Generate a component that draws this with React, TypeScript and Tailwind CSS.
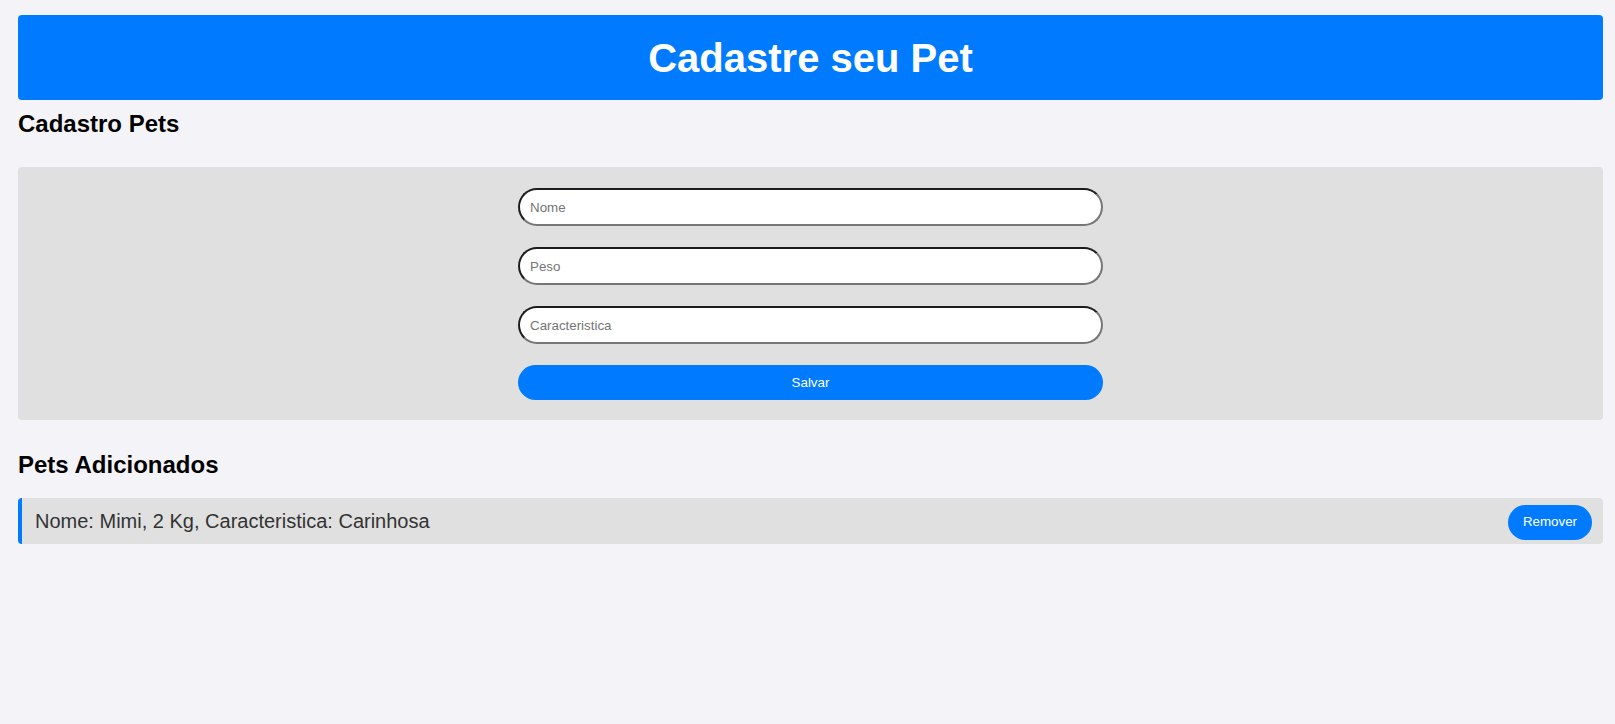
import { useState } from 'react';

type Pet = { nome: string; peso: string; caracteristica: string };

const inputCls =
  'h-[38px] w-full rounded-[20px] border-2 border-solid border-t-[#1c1c1c] border-l-[#1c1c1c] border-b-[#767676] border-r-[#767676] bg-white px-[10px] text-[13.33px] text-black outline-none placeholder:text-[#757575]';

export default function App() {
  const [pets, setPets] = useState<Pet[]>([{ nome: 'Mimi', peso: '2', caracteristica: 'Carinhosa' }]);
  const [form, setForm] = useState<Pet>({ nome: '', peso: '', caracteristica: '' });

  const salvar = () => {
    if (!form.nome) return;
    setPets([...pets, form]);
    setForm({ nome: '', peso: '', caracteristica: '' });
  };

  return (
    <div className="min-h-screen bg-[#f4f4f8] pt-[15px] pl-[18px] pr-[12px] font-['Liberation_Sans',Arial,sans-serif]">
      <header className="flex h-[85px] items-center justify-center rounded-[4px] bg-[#007bff]">
        <h1 className="text-[40px] font-bold leading-[46px] text-white">Cadastre seu Pet</h1>
      </header>

      <h2 className="mt-[10px] text-[24px] font-bold leading-[28px] text-black">Cadastro Pets</h2>

      <section className="mt-[29px] rounded-[4px] bg-[#e0e0e0] pt-[21px] pb-[20px]">
        <div className="mx-auto flex w-[585px] flex-col gap-[21px]">
          <input
            className={inputCls}
            placeholder="Nome"
            value={form.nome}
            onChange={(e) => setForm({ ...form, nome: e.target.value })}
          />
          <input
            className={inputCls}
            placeholder="Peso"
            value={form.peso}
            onChange={(e) => setForm({ ...form, peso: e.target.value })}
          />
          <input
            className={inputCls}
            placeholder="Caracteristica"
            value={form.caracteristica}
            onChange={(e) => setForm({ ...form, caracteristica: e.target.value })}
          />
          <button
            onClick={salvar}
            className="h-[35px] w-full rounded-full bg-[#007bff] text-[13.33px] leading-[16px] text-white"
          >
            Salvar
          </button>
        </div>
      </section>

      <h2 className="mt-[31px] text-[24px] font-bold leading-[28px] text-black">Pets Adicionados</h2>

      <ul className="mt-[19px] flex flex-col gap-[10px]">
        {pets.map((p, i) => (
          <li
            key={i}
            className="flex h-[46px] items-center justify-between rounded-[4px] border-l-4 border-[#007bff] bg-[#e0e0e0] pl-[13px] pr-[11px]"
          >
            <span className="text-[20px] leading-[23px] text-[#333]">
              Nome: {p.nome}, {p.peso} Kg, Caracteristica: {p.caracteristica}
            </span>
            <button
              onClick={() => setPets(pets.filter((_, j) => j !== i))}
              className="mt-[2px] h-[35px] rounded-full bg-[#007bff] px-[15px] text-[13.33px] leading-[16px] text-white"
            >
              Remover
            </button>
          </li>
        ))}
      </ul>
    </div>
  );
}
